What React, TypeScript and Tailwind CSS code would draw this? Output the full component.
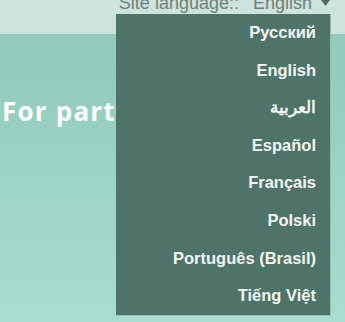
import { useState } from "react";

const LANGS = [
  { label: "Русский", lang: "ru" },
  { label: "English", lang: "en" },
  { label: "العربية", lang: "ar" },
  { label: "Español", lang: "es" },
  { label: "Français", lang: "fr" },
  { label: "Polski", lang: "pl" },
  { label: "Português (Brasil)", lang: "pt-BR" },
  { label: "Tiếng Việt", lang: "vi" },
];

const App = () => {
  const [current, setCurrent] = useState("English");

  return (
    <div className="relative h-[322px] w-[345px] overflow-hidden bg-gradient-to-b from-[#8cc8b8] to-[#a8ddd0] font-['Liberation_Sans',Arial,sans-serif]">
      {/* Top bar */}
      <div className="flex h-[34px] items-start justify-end bg-[#cce3de] pr-[15px]">
        <div className="-mt-[7px] flex items-center text-[18px] leading-[21px] text-[#6f817c]">
          <span>Site language::</span>
          <span className="ml-[14px]">{current}</span>
          <svg width="9" height="6" viewBox="0 0 9 6" className="ml-[9px] -mt-[1px]">
            <path d="M0 0h9L4.5 6z" fill="#56635f" />
          </svg>
        </div>
      </div>

      {/* Page heading */}
      <h1 className="mt-[62px] pl-[2px] font-['Open_Sans',sans-serif] text-[26px] font-bold leading-[30px] tracking-[1.2px] whitespace-nowrap text-white">
        For participants
      </h1>

      {/* Language menu */}
      <ul className="absolute left-[116px] top-[14px] w-[215px] border-r border-b border-[#9db9b0] bg-[#4e7368] pr-[14px] text-right">
        {LANGS.map((l) => (
          <li
            key={l.lang}
            lang={l.lang}
            onClick={() => setCurrent(l.label)}
            className="h-[37.6px] cursor-pointer text-[16.5px] leading-[37.6px] font-bold text-[#f3f6f4]"
          >
            {l.label}
          </li>
        ))}
      </ul>
    </div>
  );
};

export default App;
